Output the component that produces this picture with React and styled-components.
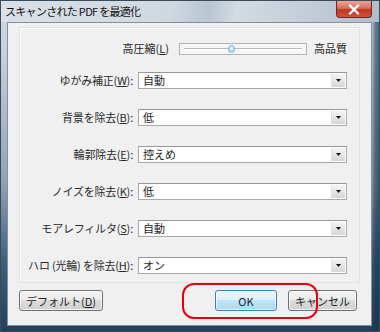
import React from 'react';
import styled, { createGlobalStyle } from 'styled-components';

const GlobalStyle = createGlobalStyle`
  html, body {
    margin: 0;
    padding: 0;
    width: 380px;
    height: 332px;
    overflow: hidden;
    background: #ffffff;
  }
  * { box-sizing: border-box; }
`;

const FONT = `'Noto Sans CJK JP', 'Noto Sans', sans-serif`;

const rows = [
  { label: 'ゆがみ補正', key: 'W', value: '自動' },
  { label: '背景を除去', key: 'B', value: '低' },
  { label: '輪郭除去', key: 'E', value: '控えめ' },
  { label: 'ノイズを除去', key: 'K', value: '低' },
  { label: 'モアレフィルタ', key: 'S', value: '自動' },
  { label: 'ハロ (光輪) を除去', key: 'H', value: 'オン' },
];

function App() {
  return (
    <>
      <GlobalStyle />
      <Window>
        <TitleBar>
          <Title>スキャンされた PDF を最適化</Title>
          <CloseButton>
            <svg width="12" height="11" viewBox="0 0 12 11">
              <path d="M2 1.5 L10 9.5 M10 1.5 L2 9.5" stroke="#ffffff" strokeWidth="2.4" strokeLinecap="round" />
            </svg>
          </CloseButton>
        </TitleBar>
        <Frame>
          <Client>
            <Panel>
              <SliderRow>
                <span>
                  高圧縮(<u>L</u>)
                </span>
                <Track>
                  <Groove />
                  <Thumb>
                    <svg width="7" height="8" viewBox="0 0 7 8">
                      <ellipse cx="3.5" cy="4" rx="3" ry="3.5" fill="#b7e0f4" stroke="#5fa8d0" strokeWidth="0.8" />
                      <ellipse cx="3.5" cy="3.2" rx="1.4" ry="1.5" fill="#eef9ff" />
                    </svg>
                  </Thumb>
                </Track>
                <span>高品質</span>
              </SliderRow>
              <FieldGrid>
                {rows.map((r) => (
                  <React.Fragment key={r.key}>
                    <Label>
                      <span>
                        {r.label}(<u>{r.key}</u>):
                      </span>
                    </Label>
                    <Select>
                      <span>{r.value}</span>
                      <ArrowBox>
                        <svg width="5" height="3" viewBox="0 0 5 3">
                          <path d="M0 0 H5 L2.5 3 Z" fill="#111" />
                        </svg>
                      </ArrowBox>
                    </Select>
                  </React.Fragment>
                ))}
              </FieldGrid>
            </Panel>
            <Footer>
              <Button>
                デフォルト(<u>D</u>)
              </Button>
              <Spacer />
              <Button $primary>OK</Button>
              <Button>キャンセル</Button>
              <Annotation />
            </Footer>
          </Client>
        </Frame>
      </Window>
    </>
  );
}

const Window = styled.div`
  width: 380px;
  height: 332px;
  display: flex;
  flex-direction: column;
  font-family: ${FONT};
  color: #1e1e1e;
  background:
    linear-gradient(90deg, rgba(0, 0, 0, 0) 0, rgba(0, 0, 0, 0) 370px, rgba(20, 50, 75, 0.55) 374px, rgba(20, 50, 75, 0.75) 380px),
    linear-gradient(180deg, #d6dee6 0%, #c3ced9 18%, #8ea3b6 55%, #3d5d78 80%, #22405a 100%);
  border: 1px solid #3a4b5a;
`;

const TitleBar = styled.div`
  height: 21px;
  display: flex;
  align-items: flex-start;
  justify-content: space-between;
  padding: 0 7px 0 4px;
  background: linear-gradient(100deg, #d9e0e6 0%, #cfd8e0 45%, #b8c6d3 55%, #d3dbe3 62%, #c4ced8 80%, #aebdcb 100%);
`;

const Title = styled.div`
  font-size: 11px;
  letter-spacing: -0.7px;
  line-height: 20px;
  color: #111;
`;

const CloseButton = styled.div`
  width: 36px;
  height: 17px;
  display: flex;
  align-items: center;
  justify-content: center;
  border: 1px solid #6d2a22;
  border-top: none;
  border-radius: 0 0 4px 4px;
  background: linear-gradient(180deg, #e8a597 0%, #d8705e 45%, #c2341f 55%, #d0523c 100%);
`;

const Frame = styled.div`
  flex: 1;
  display: flex;
  padding: 0 7px 5px 6px;
`;

const Client = styled.div`
  flex: 1;
  display: flex;
  flex-direction: column;
  background: #f0f0f0;
  border: 1px solid #7f91a2;
`;

const Panel = styled.div`
  margin: 4px 11px 0 11px;
  padding: 13px 12px 8px 12px;
  border: 1px solid #e2e2e2;
  box-shadow: inset 1px 1px 0 #fbfbfb;
`;

const SliderRow = styled.div`
  height: 14px;
  display: flex;
  align-items: center;
  justify-content: flex-end;
  font-size: 11px;
  margin-bottom: 17px;
`;

const Track = styled.div`
  position: relative;
  width: 128px;
  height: 12px;
  margin: 2px 7px 0 10px;
  border: 1px solid #b4b4b4;
  background: #f6f6f6;
  display: flex;
  align-items: center;
  padding: 0 4px;
`;

const Groove = styled.div`
  flex: 1;
  height: 2px;
  border-top: 1px solid #b9b9b9;
  border-bottom: 1px solid #ffffff;
`;

const Thumb = styled.div`
  position: absolute;
  left: 48px;
  top: 1px;
  display: flex;
`;

const FieldGrid = styled.div`
  display: grid;
  grid-template-columns: minmax(0, 1fr) 209px;
  column-gap: 5px;
  row-gap: 20px;
`;

const Label = styled.div`
  display: flex;
  justify-content: flex-end;
  font-size: 11px;
  line-height: 17px;
  letter-spacing: -0.2px;
  white-space: nowrap;
  color: #2a2a2a;
`;

const Select = styled.div`
  height: 17px;
  display: flex;
  align-items: stretch;
  justify-content: space-between;
  background: #ffffff;
  border: 1px solid #a9a9a9;
  border-top-color: #979797;
  font-size: 11px;
  line-height: 15px;
  padding: 0 1px 0 4px;
  span {
    color: #1e1e1e;
  }
`;

const ArrowBox = styled.div`
  width: 14px;
  margin: 1px 0;
  display: flex;
  align-items: center;
  justify-content: center;
  background: linear-gradient(180deg, #f4f4f4 0%, #e6e6e6 50%, #d6d6d6 100%);
  border-left: 1px solid #e0e0e0;
`;

const Footer = styled.div`
  position: relative;
  flex: 1;
  display: flex;
  align-items: flex-start;
  gap: 11px;
  padding: 7px 14px 0 11px;
`;

const Spacer = styled.div`
  flex: 1;
`;

const Button = styled.div`
  height: 21px;
  min-width: 62px;
  padding: 0 6px;
  display: flex;
  align-items: center;
  justify-content: center;
  font-size: 11px;
  color: #1e1e1e;
  border: 1px solid ${(p) => (p.$primary ? '#3c7fb1' : '#707070')};
  border-radius: 3px;
  background: ${(p) =>
    p.$primary
      ? 'linear-gradient(180deg, #eaf6fd 0%, #d9f0fc 50%, #bee6fd 50%, #a7d9f5 100%)'
      : 'linear-gradient(180deg, #f2f2f2 0%, #ebebeb 50%, #dddddd 50%, #cfcfcf 100%)'};
  box-shadow: inset 0 0 0 1px rgba(255, 255, 255, 0.7);
`;

const Annotation = styled.div`
  position: absolute;
  left: 174px;
  top: 0;
  width: 136px;
  height: 36px;
  border: 2.5px solid #e8000f;
  border-radius: 12px;
  pointer-events: none;
`;

export default App;
